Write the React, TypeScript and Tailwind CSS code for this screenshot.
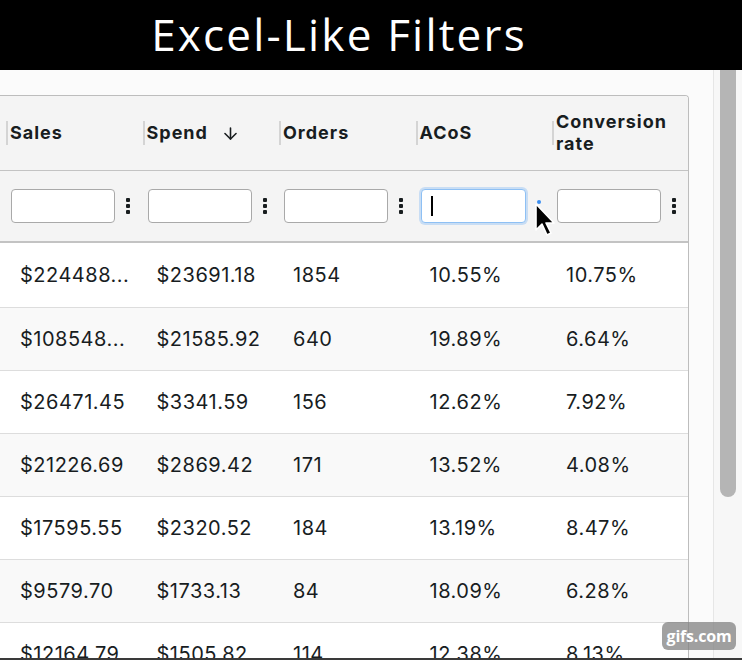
import React from "react";
import { ArrowDown } from "lucide-react";

const rows = [
  ["$224488...", "$23691.18", "1854", "10.55%", "10.75%"],
  ["$108548...", "$21585.92", "640", "19.89%", "6.64%"],
  ["$26471.45", "$3341.59", "156", "12.62%", "7.92%"],
  ["$21226.69", "$2869.42", "171", "13.52%", "4.08%"],
  ["$17595.55", "$2320.52", "184", "13.19%", "8.47%"],
  ["$9579.70", "$1733.13", "84", "18.09%", "6.28%"],
  ["$12164.79", "$1505.82", "114", "12.38%", "8.13%"],
];

function Dots() {
  return (
    <div className="flex flex-col gap-[2px] ml-[11px]">
      <div className="w-[4px] h-[4px] bg-[#181d1f] rounded-[1px]" />
      <div className="w-[4px] h-[4px] bg-[#181d1f] rounded-[1px]" />
      <div className="w-[4px] h-[4px] bg-[#181d1f] rounded-[1px]" />
    </div>
  );
}

function HeaderCell({ children }: { children: React.ReactNode }) {
  return (
    <div className="w-[136.5px] shrink-0 flex items-center">
      <div className="w-[2px] h-[24px] bg-[#d4d4d4] shrink-0" />
      <div className="ml-[2px] text-[18px] font-bold text-[#181d1f] leading-[22px] tracking-[1px] flex items-center">
        {children}
      </div>
    </div>
  );
}

function FilterCell({ focused }: { focused?: boolean }) {
  return (
    <div className="w-[136.5px] shrink-0 flex items-center pl-[5px]">
      {focused ? (
        <div className="w-[105px] h-[34px] rounded-[4px] bg-white border border-[#8ec0f4] shadow-[0_0_0_2px_rgba(100,170,245,0.3)] flex items-center pl-[9px]">
          <div className="w-[2px] h-[20px] bg-black" />
        </div>
      ) : (
        <div className="w-[104px] h-[34px] rounded-[4px] bg-white border border-[#a9a9a9]" />
      )}
      {focused ? <div className="w-[4px] ml-[11px]" /> : <Dots />}
    </div>
  );
}

export default function App() {
  return (
    <div
      className="w-[742px] h-[660px] overflow-hidden relative bg-[#fbfbfb] flex flex-col"
      style={{ fontFamily: "Inter, 'Liberation Sans', sans-serif" }}
    >
      <div className="h-[70px] bg-black flex items-center justify-center pr-[64px] pb-[2px] shrink-0">
        <span
          className="text-white text-[44px] font-medium leading-none tracking-[2.2px]"
          style={{ fontFamily: "'Open Sans', Lato, sans-serif" }}
        >
          Excel-Like Filters
        </span>
      </div>
      <div className="flex flex-1 min-h-0">
        <div className="w-[713px] shrink-0 pt-[25px]">
          <div className="w-[689px] border-t border-r border-[#bdbdbd] rounded-tr-[4px] bg-white overflow-hidden">
            <div className="h-[75px] bg-[#f4f4f4] flex pl-[6px] border-b border-[#c3c3c3]">
              <HeaderCell>Sales</HeaderCell>
              <HeaderCell>
                Spend
                <ArrowDown size={19} strokeWidth={2} className="ml-[13px] text-[#181d1f]" />
              </HeaderCell>
              <HeaderCell>Orders</HeaderCell>
              <HeaderCell>ACoS</HeaderCell>
              <HeaderCell>
                <span>
                  Conversion
                  <br />
                  rate
                </span>
              </HeaderCell>
            </div>
            <div className="h-[72px] bg-[#f4f4f4] flex pl-[6px] border-b-2 border-[#c3c3c3]">
              <FilterCell />
              <FilterCell />
              <FilterCell />
              <FilterCell focused />
              <FilterCell />
            </div>
            {rows.map((r, i) => (
              <div
                key={i}
                className={`${i === 0 ? "h-[65px]" : "h-[63px]"} flex pl-[6px] border-b border-[#dddddd] ${i % 2 === 1 ? "bg-[#f9f9f9]" : "bg-white"}`}
              >
                {r.map((c, j) => (
                  <div
                    key={j}
                    className="w-[136.5px] shrink-0 flex items-center pl-[14px] pr-[8px] text-[20px] tracking-[0.5px] text-[#181d1f] whitespace-nowrap overflow-hidden"
                  >
                    {c}
                  </div>
                ))}
              </div>
            ))}
          </div>
        </div>
        <div className="flex-1 border-l border-[#e6e6e6] bg-[#f7f7f7] pl-[6px]">
          <div className="w-[16px] h-[427px] bg-[#b5b5b5] rounded-b-full" />
        </div>
      </div>
      {/* cursor */}
      <div className="absolute left-[537px] top-[200px] w-[4px] h-[4px] rounded-full bg-[#3b8ef0]" />
      <svg className="absolute left-[533px] top-[202px]" width="24" height="36" viewBox="0 0 24 36">
        <path d="M3 2 L3 28 L9 22 L14 33 L18 31 L13 21 L21 21 Z" fill="black" stroke="white" strokeWidth="1.6" strokeLinejoin="round" />
      </svg>
      {/* watermark */}
      <div className="absolute left-[662px] top-[622px] w-[74px] h-[28px] rounded-[6px] bg-[rgba(130,130,130,0.75)] flex items-center justify-center">
        <span className="text-white text-[16px] font-bold leading-none tracking-[-0.2px]" style={{ fontFamily: "'Open Sans', sans-serif" }}>
          gifs.com
        </span>
      </div>
      <div className="absolute left-0 bottom-0 w-full h-[2px] bg-[#3a3a3a]" />
    </div>
  );
}
